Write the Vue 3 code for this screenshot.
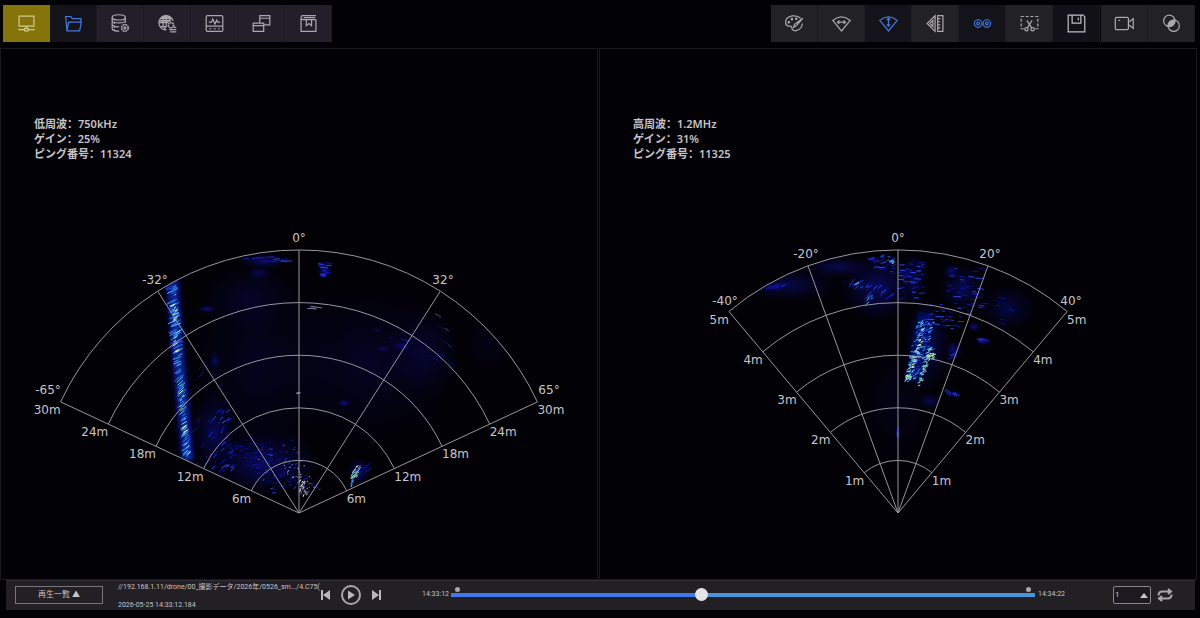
<script setup>
import { ref, computed } from 'vue'

const leftTools = [
  { id: 'monitor', label: '表示', state: 'primary', art: '<path d="M3.500 3.500h17v11.500h-17zM12 15v2.500M2.500 19h7.500M14 19h7.500M10 17.500h4v3h-4z"/>' },
  { id: 'folder', label: 'フォルダー', state: 'active', art: '<path d="M4.500 20.500l-1.500-16.500h6l1.500 2.500h10v3.500M4.500 20.500h14.500l2-10h-14.500zM6.500 10.500l-1 3"/>' },
  { id: 'database', label: 'データ設定', state: '', art: '<ellipse cx="10" cy="5" rx="7.500" ry="3"/><path d="M2.500 5v13c0 2 4 3 8 2.700M17.500 5v6M2.500 9c1 3 14 3 15 0M2.500 13.500c2 2 5 2.500 8 2.200M5 10v2.500M5 14.500v2.500M5 18.500v1.500"/><circle cx="17" cy="17" r="3.800" stroke-dasharray="2.400 .6" stroke-width="1.700"/><circle cx="17" cy="17" r="1.200"/>' },
  { id: 'globe', label: 'ネットワーク', state: '', art: '<path d="M18.500 9a8.300 8.300 0 1 0-8 10.500M10.500 2.500c-5 4-5 13 0 17M10.500 2.500c3 2 4.500 4 4.500 7M10.500 2.500v14M3.500 6.500h14M2 11h11M3.500 15.500h7"/><path d="M5.500 5l9.500.5M3.500 9h12" stroke-width="1.800"/><circle cx="16" cy="14" r="3" stroke-dasharray="2 .5" stroke-width="1.800"/><path d="M14 19h8M15 21.500h7M19 16.500h3"/>' },
  { id: 'signal', label: '信号', state: '', art: '<rect x="2.500" y="3" width="19" height="18" rx="1.500"/><path d="M2.500 15h19M5.500 10.500h3l1.500-3.500 2.500 5.500 2-4.500 1 2.500h3M6 18h2.500M11 18h2.500M16 18h2"/>' },
  { id: 'windows', label: 'ウィンドウ', state: '', art: '<path d="M2.500 11.500h12v9.500h-12zM2.500 14.500h12M10 11v-8h11.500v10.500h-6.500M10 6h11.500"/>' },
  { id: 'manual', label: 'マニュアル', state: '', art: '<path d="M20.500 7.500v13.500h-17v-16q0-2 2-2h15M3.500 5.500q0 2 2 2h15M6.500 5.300h13M9.500 7.500v7l3-2.500 3 2.500v-7"/>' },
]

const rightTools = [
  { id: 'palette', label: 'カラー', state: '', art: '<path d="M19 6c-4.500-4.500-15-3.500-17 3-1 5 2 6.500 4.500 6 2-.3 2.500 1 2.500 2.500.5 4.500 11 3.500 12-5.500M21.500 6l-7.500 8.500-3 2 1-3.500z"/><circle cx="5.500" cy="10.500" r=".8"/><circle cx="9" cy="7" r=".8"/><circle cx="14" cy="6.500" r=".8"/>' },
  { id: 'fan-width', label: '扇幅', state: '', art: '<path d="M2 8.500q10-8 20 0l-10 12zM7.500 10.500h9M9.500 8.500l-2 2 2 2M14.500 8.500l2 2-2 2"/>' },
  { id: 'fan-depth', label: '扇奥行き', state: 'active', art: '<path d="M2 8.500q10-8 20 0l-10 12zM12 6v9M10 8l2-2 2 2M10 13l2 2 2-2"/>' },
  { id: 'ruler', label: '計測', state: '', art: '<path d="M11.500 3l-9 9 9 9zM14.500 3h6v18h-6zM14.500 6.500h3M14.500 10h3M14.500 13.500h3M14.500 17h3M9 8.500l-3.500 3.500 3.500 3.500z"/>' },
  { id: 'link', label: '連動', state: 'active', art: '<circle cx="7" cy="12" r="4.300"/><circle cx="7" cy="12" r="1.500"/><circle cx="17" cy="12" r="4.300"/><circle cx="17" cy="12" r="1.500"/>' },
  { id: 'snip', label: '切り取り', state: '', art: '<path d="M5.500 18h-3v-14h19v14h-3" stroke-dasharray="3.500 2"/><path d="M9 8.500l5.500 8.500M15 8.500l-5.500 8.500"/><circle cx="8.500" cy="18.500" r="1.900"/><circle cx="15.500" cy="18.500" r="1.900"/>' },
  { id: 'save', label: '保存', state: 'dark', art: '<path d="M2.500 2.500h17l2 2v17h-19zM7 2.500v9h10v-9M14 5v3.500"/>' },
]

const captureTools = [
  { id: 'record', label: '録画', state: '', art: '<rect x="1.500" y="5" width="15" height="14" rx="1.500"/><path d="M16.500 10.500l5.500-4v11l-5.500-4M5 8.500h2"/>' },
  { id: 'blend', label: '合成', state: '', art: '<circle cx="9.500" cy="9" r="6.500"/><circle cx="14.500" cy="14.500" r="6.500"/><path d="M8.300 15.300a6.500 6.500 0 0 1 7.400-7.200 6.500 6.500 0 0 1-7.400 7.200z" fill="currentColor"/>' },
]

const toolGroups = [rightTools, captureTools]

const RADIUS = 263

function polar(r, deg) {
  const a = (deg * Math.PI) / 180
  return { x: +(r * Math.sin(a)).toFixed(1), y: +(-r * Math.cos(a)).toFixed(1) }
}

function makeRandom(seed) {
  let s = seed
  return () => {
    s = (s + 0x6d2b79f5) | 0
    let t = Math.imul(s ^ (s >>> 15), 1 | s)
    t = (t + Math.imul(t ^ (t >>> 7), 61 | t)) ^ t
    return ((t ^ (t >>> 14)) >>> 0) / 4294967296
  }
}

const deep = ['#08086a', '#0b0b8c', '#1010a8', '#0c1478']
const mid = ['#1018b0', '#2030c8', '#2848e0', '#101090', '#0c0c80']
const hot = ['#2050d8', '#2c78e0', '#40a0e8', '#58c8d8', '#1830b0', '#2060d8', '#101c90']
const glow = ['#68c8e8', '#80e0d8', '#b0f0a8', '#e8f8a8', '#3878e0', '#90f0f0']
const grey = ['#8888b0', '#c0c0d0', '#4848a0']

// Scatters short echo marks round the line from a to b.
function scatter(rand, { a, b, spread, count, len, tilt, colors, width = 1 }) {
  return Array.from({ length: count }, () => {
    const t = rand()
    const off = (rand() - 0.5) * 2 * spread
    const x = a[0] + (b[0] - a[0]) * t + off
    const y = a[1] + (b[1] - a[1]) * t + (rand() - 0.5) * (a[1] === b[1] ? spread : 4)
    const l = len * (0.4 + rand() * 0.8)
    const ang = ((tilt + (rand() - 0.5) * 16) * Math.PI) / 180
    const dx = (Math.cos(ang) * l) / 2
    const dy = (-Math.sin(ang) * l) / 2
    return {
      d: `M${(x - dx).toFixed(1)} ${(y - dy).toFixed(1)}L${(x + dx).toFixed(1)} ${(y + dy).toFixed(1)}`,
      color: colors[Math.floor(rand() * colors.length)],
      width,
    }
  })
}

function buildFan(cfg) {
  const rand = makeRandom(cfg.seed)
  const from = polar(RADIUS, -cfg.half)
  const to = polar(RADIUS, cfg.half)
  const rings = [1, 2, 3, 4, 5].map((i) => {
    const r = (RADIUS * i) / 5
    const p = polar(r, -cfg.half)
    const q = polar(r, cfg.half)
    return {
      d: `M${p.x} ${p.y}A${r} ${r} 0 0 1 ${q.x} ${q.y}`,
      text: `${i * cfg.step}m`,
      left: { x: p.x, y: p.y + cfg.drop },
      right: { x: q.x, y: q.y + cfg.drop },
    }
  })
  return {
    ...cfg,
    outline: `M0 0L${from.x} ${from.y}A${RADIUS} ${RADIUS} 0 0 1 ${to.x} ${to.y}Z`,
    rings,
    spokes: cfg.angles.map((deg) => ({ deg, ...polar(RADIUS, deg) })),
    marks: cfg.echoes.flatMap((e) => scatter(rand, e)),
  }
}

const fans = [
  buildFan({
    id: 'low', seed: 11, half: 65, step: 6, drop: 12,
    angles: [-65, -32.5, 0, 32.5, 65],
    info: ['低周波：750kHz', 'ゲイン：25%', 'ピング番号：11324'],
    labels: [
      { text: '-65°', x: -251, y: -119 }, { text: '-32°', x: -144, y: -229 }, { text: '0°', x: 0, y: -271 },
      { text: '32°', x: 144, y: -229 }, { text: '65°', x: 250, y: -119 },
    ],
    haze: [
      { x: -40, y: -150, rx: 85, ry: 120, o: 0.18 }, { x: 70, y: -150, rx: 100, ry: 90, o: 0.22 },
      { x: 125, y: -160, rx: 40, ry: 50, o: 0.25 }, { x: -35, y: -50, rx: 60, ry: 35, o: 0.55 },
      { x: -85, y: -80, rx: 24, ry: 45, o: 0.5 }, { x: -35, y: -252, rx: 25, ry: 8, o: 0.7 },
      { x: 26, y: -243, rx: 9, ry: 10, o: 0.8 }, { x: -92, y: -204, rx: 10, ry: 4, o: 0.9 },
      { x: 45, y: -110, rx: 8, ry: 4, o: 0.9 }, { x: 190, y: -170, rx: 35, ry: 35, o: 0.12 },
      { x: -50, y: -215, rx: 50, ry: 35, o: 0.2 }, { x: 60, y: -42, rx: 12, ry: 14, o: 0.7 },
      { x: 102, y: -167, rx: 12, ry: 6, o: 0.6 }, { x: 84, y: -164, rx: 8, ry: 4, o: 0.6 },
      { x: -40, y: -240, rx: 14, ry: 8, o: 0.5 }, { x: -84, y: -152, rx: 6, ry: 8, o: 0.7 },
    ],
    beams: [
      { d: 'M-127 -236L-121 -160L-111 -52', width: 14, color: '#0a1090', opacity: 0.7 },
      { d: 'M-127 -236L-121 -160L-111 -52', width: 6, color: '#1440b8', opacity: 0.6 },
    ],
    echoes: [
      { a: [-127, -232], b: [-121, -150], spread: 3, count: 80, len: 9, tilt: 25, colors: hot },
      { a: [-121, -150], b: [-111, -54], spread: 2, count: 90, len: 8, tilt: 35, colors: hot },
      { a: [-126, -220], b: [-121, -155], spread: 2, count: 22, len: 5, tilt: 30, colors: glow },
      { a: [-118, -120], b: [-111, -56], spread: 2, count: 18, len: 5, tilt: 35, colors: glow },
      { a: [-100, -160], b: [-85, -45], spread: 18, count: 34, len: 7, tilt: 40, colors: deep },
      { a: [-82, -105], b: [-76, -40], spread: 12, count: 44, len: 5, tilt: 45, colors: mid },
      { a: [-60, -70], b: [-10, -30], spread: 24, count: 110, len: 4, tilt: 15, colors: deep },
      { a: [-35, -75], b: [0, -20], spread: 28, count: 55, len: 3, tilt: 10, colors: mid },
      { a: [-8, -52], b: [12, -20], spread: 14, count: 36, len: 2, tilt: 20, colors: grey },
      { a: [1, -32], b: [7, -18], spread: 4, count: 26, len: 3, tilt: 70, colors: ['#b0b0c8', '#e0e0e0', '#5050b0'] },
      { a: [60, -48], b: [54, -35], spread: 3, count: 34, len: 4, tilt: 45, colors: glow },
      { a: [54, -35], b: [52, -24], spread: 1, count: 16, len: 3, tilt: 70, colors: hot },
      { a: [70, -50], b: [56, -35], spread: 5, count: 14, len: 5, tilt: 40, colors: deep },
      { a: [-50, -256], b: [-10, -252], spread: 5, count: 14, len: 10, tilt: 4, colors: mid },
      { a: [26, -250], b: [26, -236], spread: 4, count: 16, len: 7, tilt: -3, colors: mid },
      { a: [80, -185], b: [150, -145], spread: 15, count: 10, len: 7, tilt: -25, colors: deep },
      { a: [138, -200], b: [148, -165], spread: 6, count: 5, len: 8, tilt: -35, colors: ['#303068', '#484870', '#101070'] },
      { a: [8, -205], b: [16, -205], spread: 2, count: 3, len: 10, tilt: -3, colors: ['#7878a0'] },
      { a: [-2, -120], b: [0, -120], spread: 1, count: 2, len: 4, tilt: 0, colors: ['#9090b0'] },
    ],
  }),
  buildFan({
    id: 'high', seed: 29, half: 40, step: 1, drop: 12,
    angles: [-40, -20, 0, 20, 40],
    info: ['高周波：1.2MHz', 'ゲイン：31%', 'ピング番号：11325'],
    labels: [
      { text: '-40°', x: -173, y: -208 }, { text: '-20°', x: -92, y: -255 }, { text: '0°', x: 0, y: -271 },
      { text: '20°', x: 92, y: -255 }, { text: '40°', x: 173, y: -208 },
    ],
    haze: [
      { x: -20, y: -225, rx: 38, ry: 35, o: 0.6 }, { x: -110, y: -228, rx: 55, ry: 18, o: 0.45 },
      { x: -124, y: -226, rx: 14, ry: 5, o: 0.9 }, { x: -60, y: -246, rx: 40, ry: 12, o: 0.5 },
      { x: 65, y: -225, rx: 25, ry: 25, o: 0.55 }, { x: 110, y: -205, rx: 30, ry: 25, o: 0.4 },
      { x: 30, y: -170, rx: 25, ry: 50, o: 0.5 }, { x: 85, y: -172, rx: 9, ry: 5, o: 1 },
      { x: 55, y: -119, rx: 9, ry: 4, o: 1 }, { x: 0, y: -82, rx: 3, ry: 8, o: 0.8 },
      { x: 56, y: -163, rx: 10, ry: 10, o: 0.7 }, { x: 0, y: -110, rx: 45, ry: 70, o: 0.12 },
      { x: 32, y: -112, rx: 12, ry: 9, o: 0.5 }, { x: 15, y: -235, rx: 16, ry: 28, o: 0.5 },
      { x: 53, y: -242, rx: 9, ry: 8, o: 0.7 }, { x: 76, y: -186, rx: 7, ry: 5, o: 0.9 },
    ],
    beams: [{ d: 'M28 -200L15 -132', width: 16, color: '#0a1480', opacity: 0.6 }],
    echoes: [
      { a: [-18, -257], b: [-6, -240], spread: 14, count: 32, len: 6, tilt: 10, colors: mid },
      { a: [-8, -256], b: [-4, -248], spread: 3, count: 12, len: 4, tilt: 20, colors: hot },
      { a: [-40, -232], b: [-15, -215], spread: 14, count: 30, len: 6, tilt: 35, colors: mid },
      { a: [-24, -220], b: [-34, -210], spread: 3, count: 12, len: 5, tilt: 40, colors: hot },
      { a: [-38, -232], b: [-42, -228], spread: 3, count: 7, len: 5, tilt: 30, colors: hot },
      { a: [15, -250], b: [12, -215], spread: 13, count: 46, len: 6, tilt: 0, colors: mid },
      { a: [65, -245], b: [70, -200], spread: 18, count: 36, len: 7, tilt: -5, colors: mid },
      { a: [95, -215], b: [115, -190], spread: 10, count: 9, len: 7, tilt: -15, colors: deep },
      { a: [45, -210], b: [50, -185], spread: 18, count: 30, len: 6, tilt: -5, colors: mid },
      { a: [30, -200], b: [27, -180], spread: 7, count: 32, len: 4, tilt: 15, colors: mid },
      { a: [28, -192], b: [15, -132], spread: 8, count: 170, len: 3, tilt: 15, colors: hot },
      { a: [25, -190], b: [21, -165], spread: 2, count: 16, len: 3, tilt: 30, colors: glow },
      { a: [20, -165], b: [9, -131], spread: 2.5, count: 55, len: 3, tilt: 20, colors: glow },
      { a: [33, -165], b: [21, -129], spread: 2.5, count: 50, len: 3, tilt: 20, colors: glow },
      { a: [36, -160], b: [34, -155], spread: 2, count: 10, len: 3, tilt: 20, colors: ['#d8e0a0', '#80d8d0'] },
      { a: [57, -168], b: [56, -155], spread: 5, count: 12, len: 4, tilt: 30, colors: mid },
      { a: [83, -174], b: [87, -171], spread: 2, count: 6, len: 6, tilt: -15, colors: mid },
      { a: [50, -122], b: [59, -117], spread: 2, count: 6, len: 6, tilt: -30, colors: mid },
      { a: [-130, -225], b: [-112, -230], spread: 8, count: 8, len: 7, tilt: 25, colors: mid },
      { a: [0, -85], b: [0, -76], spread: 1, count: 5, len: 4, tilt: 90, colors: mid },
    ],
  }),
]

const position = ref(427)
const speed = ref('1')
const fill = computed(() => `${position.value / 10}%`)
</script>

<template>
  <main class="viewer">
    <header class="toolbar">
      <nav class="group cool" aria-label="メイン">
        <button v-for="t in leftTools" :key="t.id" type="button" class="tool" :class="t.state" :aria-label="t.label">
          <svg viewBox="0 0 24 24" class="icon" v-html="t.art"></svg>
        </button>
      </nav>
      <div class="tools-right">
        <nav v-for="(g, i) in toolGroups" :key="i" class="group" aria-label="ツール">
          <button v-for="t in g" :key="t.id" type="button" class="tool" :class="t.state" :aria-label="t.label">
            <svg viewBox="0 0 24 24" class="icon" v-html="t.art"></svg>
          </button>
        </nav>
      </div>
    </header>

    <section class="panels">
      <article v-for="fan in fans" :key="fan.id" class="panel">
        <div class="info">
          <p v-for="line in fan.info" :key="line">{{ line }}</p>
        </div>
        <svg class="sonar" viewBox="-298 -464 596 530" role="img" :aria-label="fan.info[0]">
          <defs>
            <clipPath :id="`clip-${fan.id}`"><path :d="fan.outline" /></clipPath>
            <radialGradient :id="`haze-${fan.id}`">
              <stop offset="0" stop-color="#10109c" />
              <stop offset="0.5" stop-color="#0a0a68" stop-opacity="0.6" />
              <stop offset="1" stop-color="#04043c" stop-opacity="0" />
            </radialGradient>
            <filter :id="`soft-${fan.id}`" x="-50%" y="-10%" width="200%" height="120%">
              <feGaussianBlur stdDeviation="2" />
            </filter>
            <filter :id="`fine-${fan.id}`">
              <feGaussianBlur stdDeviation="0.4" />
            </filter>
          </defs>
          <g :clip-path="`url(#clip-${fan.id})`">
            <ellipse v-for="(h, i) in fan.haze" :key="'h' + i" :cx="h.x" :cy="h.y" :rx="h.rx" :ry="h.ry" :fill="`url(#haze-${fan.id})`" :opacity="h.o" />
            <g :filter="`url(#soft-${fan.id})`">
              <path v-for="(b, i) in fan.beams" :key="'b' + i" :d="b.d" fill="none" :stroke="b.color" :stroke-width="b.width" :opacity="b.opacity" />
            </g>
            <g :filter="`url(#fine-${fan.id})`">
              <path v-for="(m, i) in fan.marks" :key="'m' + i" :d="m.d" :stroke="m.color" :stroke-width="m.width" />
            </g>
          </g>
          <g class="grid">
            <path v-for="r in fan.rings" :key="r.text" :d="r.d" />
            <path v-for="s in fan.spokes" :key="s.deg" :d="`M0 0L${s.x} ${s.y}`" />
          </g>
          <g class="labels">
            <text v-for="l in fan.labels" :key="l.text" :x="l.x" :y="l.y" text-anchor="middle">{{ l.text }}</text>
            <template v-for="r in fan.rings" :key="r.text">
              <text :x="r.left.x" :y="r.left.y" text-anchor="end">{{ r.text }}</text>
              <text :x="r.right.x" :y="r.right.y">{{ r.text }}</text>
            </template>
          </g>
        </svg>
      </article>
    </section>

    <footer class="player">
      <button type="button" class="list">再生一覧 ▲</button>
      <div class="file">
        <p>//192.168.1.11/drone/00_撮影データ/2026年/0526_sm.../4.C75(</p>
        <p>2026-05-25 14:33:12.184</p>
      </div>
      <div class="transport">
        <button type="button" aria-label="前へ">
          <svg viewBox="0 0 12 12" class="skip"><path d="M1 1h2v10h-2zM10 1v10l-7-5z" /></svg>
        </button>
        <button type="button" aria-label="再生">
          <svg viewBox="0 0 22 22" class="play"><circle cx="11" cy="11" r="9" /><path d="M8 6.500v9l7-4.500z" /></svg>
        </button>
        <button type="button" aria-label="次へ">
          <svg viewBox="0 0 12 12" class="skip"><path d="M9 1h2v10h-2zM2 1v10l7-5z" /></svg>
        </button>
      </div>
      <time class="start">14:33:12</time>
      <div class="seek">
        <input v-model.number="position" type="range" min="0" max="1000" aria-label="再生位置" :style="{ '--fill': fill }" />
        <i class="mark in"></i>
        <i class="mark out"></i>
      </div>
      <time class="end">14:34:22</time>
      <div class="speed">
        <select v-model="speed" aria-label="再生速度">
          <option>1</option>
          <option>2</option>
          <option>4</option>
        </select>
        <svg viewBox="0 0 8 5" class="caret"><path d="M0 5L4 0L8 5z" /></svg>
      </div>
      <button type="button" class="loop" aria-label="繰り返し">
        <svg viewBox="0 0 16 14"><path d="M1.500 7.500q0-4 4-4h8M11 1l3 2.500-3 2.500M14.500 6.500q0 4-4 4h-8M5 8l-3 2.500 3 2.500" /></svg>
      </button>
    </footer>
  </main>
</template>

<style>
body {
  background: #020105;
}
</style>

<style scoped>
.viewer {
  min-height: 100vh;
  box-sizing: border-box;
  background: #020105;
  color: #c6c4c8;
  font-family: 'Noto Sans', 'Noto Sans CJK JP', sans-serif;
}

p {
  margin: 0;
}

button {
  margin: 0;
  padding: 0;
  border: 0;
  background: none;
  color: inherit;
  font: inherit;
}

.toolbar {
  display: flex;
  justify-content: space-between;
  padding: 5px 5px 6px 3px;
}

.tools-right {
  display: flex;
  gap: 1px;
}

.group {
  display: flex;
  background: #222125;
}

.group.cool {
  background: #231f2a;
}

.tool {
  display: flex;
  align-items: center;
  justify-content: center;
  width: 47px;
  height: 37px;
  box-sizing: border-box;
  border-right: 1px solid #1d1b21;
  color: #aaa8ad;
}

.tool.primary {
  background: #857409;
  border-color: #857409;
  color: #d2c98e;
}

.tool.active {
  background: #14131a;
  color: #4478dc;
}

.tool.dark {
  background: #121117;
  color: #c0bec4;
}

.icon {
  width: 21px;
  height: 21px;
  fill: none;
  stroke: currentColor;
  stroke-width: 1.4;
}

.panels {
  display: grid;
  grid-template-columns: 1fr 1fr;
  gap: 1px;
  padding-right: 3px;
}

.panel {
  position: relative;
  border: 1px solid #1b191f;
}

.sonar {
  display: block;
  width: 100%;
}

.info {
  position: absolute;
  left: 33px;
  top: 67px;
  font-family: 'Noto Sans', 'Noto Sans CJK SC', sans-serif;
  font-size: 11px;
  font-weight: 600;
  line-height: 15px;
}

.grid {
  fill: none;
  stroke: #98969c;
  stroke-width: 1;
}

.labels {
  fill: #c8c6ca;
  font-family: 'DejaVu Sans', sans-serif;
  font-size: 12px;
}

.player {
  display: flex;
  align-items: center;
  height: 30px;
  margin: 0 5px 0 6px;
  padding: 0 22px 2px 9px;
  box-sizing: border-box;
  border-top: 1px solid #302d34;
  background: #221f25;
  font-family: Roboto, 'Noto Sans CJK JP', sans-serif;
  font-size: 7px;
  line-height: 10px;
}

.list {
  width: 88px;
  height: 18px;
  flex: none;
  border: 1px solid #77757a;
  font-size: 8px;
}

.file {
  display: grid;
  gap: 8px;
  width: 196px;
  flex: none;
  margin-left: 15px;
  padding-top: 2px;
}

.file p {
  white-space: nowrap;
}

.transport {
  display: flex;
  align-items: center;
  gap: 8px;
  margin-left: 6px;
}

.transport button {
  display: flex;
}

.transport svg {
  fill: #bab8bd;
}

.skip {
  width: 12px;
  height: 12px;
}

.play {
  width: 22px;
  height: 22px;
}

.play circle {
  fill: none;
  stroke: #a9a7ac;
  stroke-width: 2;
}

.start,
.end {
  width: 27px;
  padding-bottom: 2px;
}

.start {
  margin-left: 40px;
}

.seek {
  position: relative;
  display: flex;
  flex: 1;
  margin: 0 3px 0 2px;
}

.seek input {
  width: 100%;
  height: 14px;
  margin: 0;
  appearance: none;
  background: linear-gradient(#4079ee, #4079ee) 0 / var(--fill) 4px no-repeat, linear-gradient(#4895dc, #4895dc) 0 / 100% 4px no-repeat;
}

.seek input::-webkit-slider-thumb {
  appearance: none;
  width: 13px;
  height: 13px;
  border-radius: 50%;
  background: #e4e3e6;
}

.mark {
  position: absolute;
  top: -1px;
  width: 5px;
  height: 5px;
  border-radius: 50%;
  background: #a9a7ab;
}

.mark.in {
  left: 4px;
}

.mark.out {
  right: 4px;
}

.speed {
  position: relative;
  margin-left: 48px;
}

.speed select {
  display: block;
  width: 38px;
  height: 18px;
  padding: 0 1px;
  appearance: none;
  border: 1px solid #88868b;
  border-radius: 2px;
  background: #1c1a20;
  color: inherit;
  font: inherit;
  font-size: 8px;
}

.caret {
  position: absolute;
  right: 3px;
  top: 7px;
  width: 8px;
  height: 5px;
  fill: #c6c4c8;
  pointer-events: none;
}

.loop {
  display: flex;
  margin-left: 6px;
}

.loop svg {
  width: 16px;
  height: 14px;
  fill: none;
  stroke: #a9a7ac;
  stroke-width: 2;
}
</style>
